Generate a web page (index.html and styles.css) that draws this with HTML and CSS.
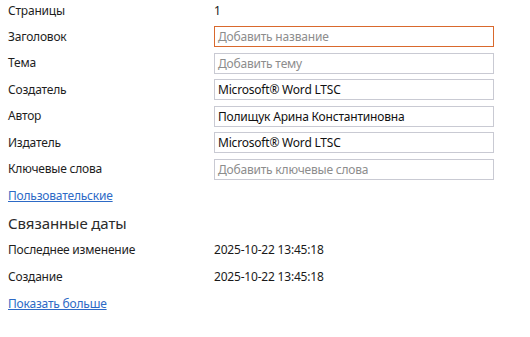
FILE: index.html
```html
<!DOCTYPE html>
<html lang="ru">
<head>
<meta charset="utf-8">
<link rel="stylesheet" href="styles.css">
</head>
<body>
<div class="props">
  <div class="row first"><span class="label">Страницы</span><span class="value">1</span></div>
  <div class="row"><span class="label">Заголовок</span><span class="box focus placeholder">Добавить название</span></div>
  <div class="row"><span class="label">Тема</span><span class="box placeholder">Добавить тему</span></div>
  <div class="row"><span class="label">Создатель</span><span class="box">Microsoft® Word LTSC</span></div>
  <div class="row"><span class="label">Автор</span><span class="box">Полищук Арина Константиновна</span></div>
  <div class="row"><span class="label">Издатель</span><span class="box">Microsoft® Word LTSC</span></div>
  <div class="row"><span class="label">Ключевые слова</span><span class="box placeholder">Добавить ключевые слова</span></div>
  <div class="row tall"><a class="link" href="#">Пользовательские</a></div>
  <div class="row tall"><span class="heading">Связанные даты</span></div>
  <div class="row tall"><span class="label">Последнее изменение</span><span class="value">2025-10-22 13:45:18</span></div>
  <div class="row tall"><span class="label">Создание</span><span class="value">2025-10-22 13:45:18</span></div>
  <div class="row tall"><a class="link" href="#">Показать больше</a></div>
</div>
</body>
</html>
```
FILE: styles.css
```css
html, body {
  margin: 0;
  padding: 0;
  background: #ffffff;
}
body {
  font-family: "Noto Sans", "Open Sans", sans-serif;
  font-size: 12px;
  letter-spacing: -0.2px;
  color: #1e1e1e;
}
.props {
  padding-left: 8px;
  display: flex;
  flex-direction: column;
}
.row {
  height: 26.5px;
  display: flex;
  align-items: center;
}
.row.first {
  height: 23.5px;
  align-items: flex-start;
  padding-top: 3px;
  box-sizing: border-box;
}
.row.tall {
  height: 26.8px;
  padding-top: 1px;
  box-sizing: border-box;
}
.label {
  width: 206px;
  flex: none;
  line-height: 16px;
}
.value {
  line-height: 16px;
  color: #1a1a1a;
}
.box {
  box-sizing: border-box;
  width: 280px;
  height: 21px;
  border: 1px solid #c9cad3;
  padding: 0 3px;
  line-height: 19px;
  color: #111111;
  white-space: nowrap;
  overflow: hidden;
}
.box.focus {
  border-color: #d9692d;
}
.box.placeholder {
  color: #8d8d8d;
}
.link {
  color: #2d6ac6;
  text-decoration: underline;
  line-height: 16px;
}
.heading {
  font-size: 15px;
  letter-spacing: -0.1px;
  color: #2b2b2b;
  line-height: 20px;
}
```
